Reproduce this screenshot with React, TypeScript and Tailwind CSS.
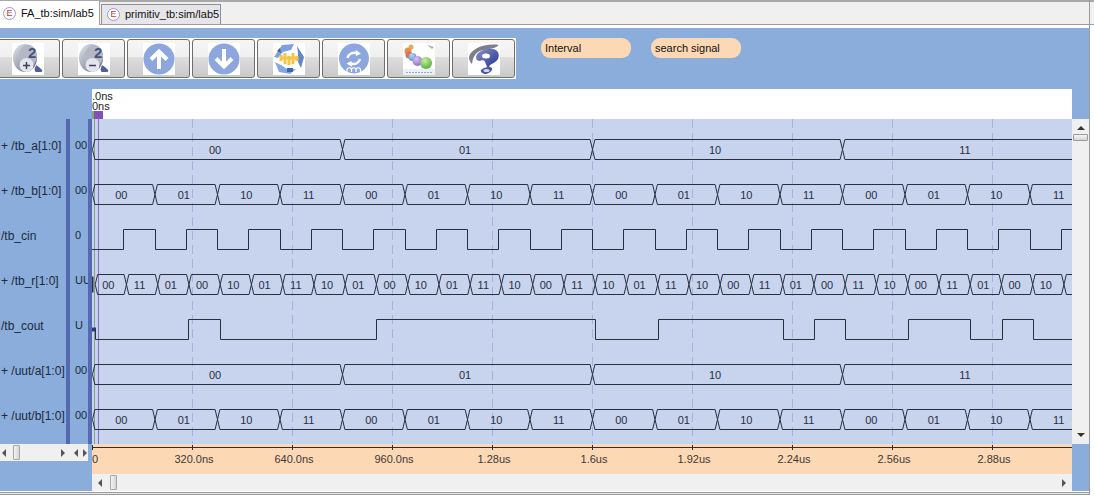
import React from 'react'

// x positions inside the plot are relative to its left edge (page x 92)
const RIGHT = 980
const BIT = 31.25
const ORIGIN = 0.5
const INK = '#283040'

const rowTop = (i: number) => 20 + i * 45

const busR = '00 11 01 00 10 01 11 10 01 00 10 01 11 10 00 11 10 01 11 10 00 11 01 00 11 10 00 11 01 00 10'.split(' ')
const cycle = ['00', '01', '10', '11']

const signals = [
  { name: '+ /tb_a[1:0]', value: '00' },
  { name: '+ /tb_b[1:0]', value: '00' },
  { name: '/tb_cin', value: '0' },
  { name: '+ /tb_r[1:0]', value: 'UU' },
  { name: '/tb_cout', value: 'U' },
  { name: '+ /uut/a[1:0]', value: '00' },
  { name: '+ /uut/b[1:0]', value: '00' },
]

const ticks = ['320.0ns', '640.0ns', '960.0ns', '1.28us', '1.6us', '1.92us', '2.24us', '2.56us', '2.88us']

const hex = (a: number, b: number, top: number) => {
  const bot = top + 20
  const mid = top + 10
  const s = 2.4
  const r = Math.min(b, RIGHT + 10)
  return `M${a} ${mid}L${a + s} ${top}L${r - s} ${top}L${r} ${mid}L${r - s} ${bot}L${a + s} ${bot}Z`
}

const Bus: React.FC<{ row: number; period: number }> = ({ row, period }) => {
  const top = rowTop(row) + 0.5
  const items = []
  for (let k = 0; k * period < RIGHT; k++) {
    const a = ORIGIN + k * period
    items.push(
      <g key={k}>
        <path d={hex(a, a + period, top)} fill="none" stroke={INK} />
        <text x={a + period / 2 - 2.5} y={top + 14} textAnchor="middle" fill={INK} fontSize="11">
          {cycle[k % 4]}
        </text>
      </g>,
    )
  }
  return <g>{items}</g>
}

// starts low at `start`, every edge toggles the level
const Square: React.FC<{ row: number; start: number; edges: number[] }> = ({ row, start, edges }) => {
  const hi = rowTop(row) + 0.5
  const lo = hi + 20
  let level = lo
  let d = `M${start} ${lo}`
  edges.forEach((x) => {
    const next = level === lo ? hi : lo
    d += `L${x} ${level}L${x} ${next}`
    level = next
  })
  return <path d={`${d}L${RIGHT} ${level}`} fill="none" stroke={INK} />
}

const Waves = () => {
  const cin: number[] = []
  for (let k = 1; k * BIT < RIGHT; k++) cin.push(Math.round(k * BIT) + 0.5)
  const coutEdges = [188, 220, 376, 595, 658, 783, 814, 845, 908, 970, 1002, 1033].map((x) => x - 92 + 0.5)
  const rTop = rowTop(3) + 0.5
  const coutTop = rowTop(4) + 0.5

  return (
    <svg width="980" height="325" className="block">
      {Array.from({ length: 9 }).map((_, i) => (
        <line key={i} x1={100.5 + i * 100} x2={100.5 + i * 100} y1="0" y2="325" stroke="#a5b3dc" strokeDasharray="9 5" />
      ))}
      <line x1="2.5" x2="2.5" y1="0" y2="325" stroke="#7fa878" />
      <line x1="6.5" x2="6.5" y1="0" y2="325" stroke="#8a6cc8" />

      <Bus row={0} period={250} />
      <Bus row={1} period={62.5} />
      <Square row={2} start={0} edges={cin} />

      {/* tb_r: undefined until the first delta, then every 100ns */}
      <path d={`M0.5 ${rTop + 2}L0.5 ${rTop + 18}`} stroke={INK} strokeWidth="2" />
      {busR.map((v, k) => {
        const a = 3.2 + k * BIT
        return (
          <g key={k}>
            <path d={hex(a, a + BIT, rTop)} fill="none" stroke={INK} />
            <text x={16.3 + k * BIT} y={rTop + 14} textAnchor="middle" fill={INK} fontSize="11">
              {v}
            </text>
          </g>
        )
      })}
      <path d={hex(3.2 + 31 * BIT, 3.2 + 32 * BIT, rTop)} fill="none" stroke={INK} />

      <rect x="0" y={coutTop + 8} width="4" height="4" fill="#2c3c80" />
      <path d={`M3.5 ${coutTop + 10}L3.5 ${coutTop + 20}`} stroke={INK} />
      <Square row={4} start={3.5} edges={coutEdges} />

      <Bus row={5} period={250} />
      <Bus row={6} period={62.5} />
    </svg>
  )
}

const Ruler = () => (
  <svg width="980" height="30" className="block">
    <line x1="0" x2="980" y1="3.5" y2="3.5" stroke={INK} />
    <line x1="0.5" x2="0.5" y1="1" y2="6" stroke={INK} />
    <text x="0" y="19" fill="#3a3a3a" fontSize="11">0</text>
    {ticks.map((t, i) => (
      <g key={t}>
        <line x1={100.5 + i * 100} x2={100.5 + i * 100} y1="1" y2="6" stroke={INK} />
        <text x={102 + i * 100} y="19" textAnchor="middle" fill="#3a3a3a" fontSize="11">
          {t}
        </text>
      </g>
    ))}
  </svg>
)

const TabGlyph = () => (
  <span className="flex h-[13px] w-[13px] shrink-0 items-center justify-center rounded-full border border-[#9a97dc] bg-white text-[9px] leading-none text-[#c04040]">
    E
  </span>
)

const ZoomIcon: React.FC<{ id: string; plus?: boolean }> = ({ id, plus }) => (
  <svg width="32" height="32" viewBox="0 0 32 32">
    <defs>
      <linearGradient id={id} x1="0" y1="0" x2="1" y2="1">
        <stop offset="0" stopColor="#e4e6ee" />
        <stop offset="0.55" stopColor="#9aa0ae" />
        <stop offset="1" stopColor="#5e6472" />
      </linearGradient>
    </defs>
    <rect width="32" height="32" fill="#fff" />
    <ellipse cx="13" cy="15" rx="12" ry="14" fill={`url(#${id})`} />
    <ellipse cx="16" cy="13" rx="9" ry="11" fill="#b4b8c6" />
    <text x="16" y="15" fontSize="15" fontWeight="700" fill="#4a5278">2</text>
    <circle cx="14.5" cy="22" r="7" fill="#e4e5ea" />
    <path d={plus ? 'M11 22.5h7M14.5 19v7' : 'M11 22.5h7'} stroke="#39405f" strokeWidth="1.5" />
    <path d="M24 22l3.5 2.5 3 3-1 1.5h-6l-1-2.5z" fill="#4e5f9c" />
  </svg>
)

const ArrowIcon: React.FC<{ down?: boolean }> = ({ down }) => (
  <svg width="32" height="32" viewBox="0 0 32 32">
    <rect width="32" height="32" fill="#fff" />
    <circle cx="16" cy="16" r="15.5" fill="#8da7de" />
    <g transform={down ? 'rotate(180 16 16)' : undefined} stroke="#fff" strokeWidth="4" fill="none">
      <path d="M16 26V9" />
      <path d="M8 16.5l8-8 8 8" />
    </g>
  </svg>
)

const StarIcon = () => (
  <svg width="32" height="32" viewBox="0 0 32 32">
    <rect width="32" height="32" fill="#fff" />
    <path d="M9 2L21 1 18 7 10 9 5 15 1 14z" fill="#7fa2dc" />
    <path d="M24 3L31 14 28 25 25 19 25 10z" fill="#5d88cc" />
    <path d="M2 19L8 22 14 26 23 26 17 31 6 29z" fill="#86a8e0" />
    <path d="M4 8l3-3 1 5z" fill="#3b5fa8" />
    <path d="M14 25h6v4h-6z" fill="#3f66ae" />
    <path d="M8 12v6M12 10v11M16 13v9M20 10v11M24 13v5M7 15h18" fill="none" stroke="#f3c648" strokeWidth="3" />
  </svg>
)

const RefreshIcon = () => (
  <svg width="32" height="32" viewBox="0 0 32 32">
    <rect width="32" height="32" fill="#fff" />
    <circle cx="16" cy="15.5" r="15" fill="#8da7de" />
    <g fill="none" stroke="#fff" strokeWidth="2.4">
      <path d="M9.5 15c1-4 5-6.5 10-4.5" />
      <path d="M22 16c-1 4-5 6-10 4.5" />
    </g>
    <path d="M17.5 7l5.5 3.5-5 2.5zM14 24l-5.500-3.500 5-2.500z" fill="#fff" />
    <path d="M9 29v-2a2 2 0 0 1 4.500 0v2M13.500 27a2 2 0 0 1 4.500 0v2M18 27a2 2 0 0 1 4.500 0v2" fill="none" stroke="#fff" strokeWidth="1.2" />
  </svg>
)

const BallsIcon = () => (
  <svg width="32" height="32" viewBox="0 0 32 32">
    <defs>
      <radialGradient id="ball-green" cx="0.4" cy="0.3" r="0.8">
        <stop offset="0" stopColor="#c8ef9c" />
        <stop offset="1" stopColor="#4aa832" />
      </radialGradient>
      <radialGradient id="ball-purple" cx="0.4" cy="0.3" r="0.8">
        <stop offset="0" stopColor="#d9c4f0" />
        <stop offset="1" stopColor="#8a62c2" />
      </radialGradient>
      <radialGradient id="ball-blue" cx="0.4" cy="0.3" r="0.8">
        <stop offset="0" stopColor="#b8d8f0" />
        <stop offset="1" stopColor="#4a88c0" />
      </radialGradient>
    </defs>
    <rect width="32" height="32" fill="#fff" />
    <rect y="26" width="32" height="6" fill="#eaf1f6" />
    <path d="M24 2l7 2-2 2z" fill="#a8b0b4" />
    <circle cx="8" cy="4" r="2.500" fill="#d8b060" />
    <circle cx="5" cy="8" r="3.500" fill="#ea8c4c" />
    <circle cx="6" cy="12" r="3.500" fill="#d8705a" />
    <circle cx="9.500" cy="14" r="4" fill="url(#ball-blue)" />
    <circle cx="14.500" cy="18" r="5" fill="url(#ball-purple)" />
    <circle cx="23" cy="20" r="6" fill="url(#ball-green)" />
    <path d="M3 29.500h26" stroke="#9aa8c0" strokeDasharray="2 1" />
  </svg>
)

const SwirlIcon = () => (
  <svg width="32" height="32" viewBox="0 0 32 32">
    <defs>
      <linearGradient id="swirl" x1="0" y1="0" x2="1" y2="1">
        <stop offset="0" stopColor="#8a92c8" />
        <stop offset="1" stopColor="#1f2f92" />
      </linearGradient>
    </defs>
    <rect width="32" height="32" fill="#fff" />
    <path d="M1 14C3 6 16 0 31 2 28 5 22 6 16 7 9 8 5 12 4 21 2 19 1 17 1 14z" fill="#7d808c" />
    <path d="M8 14C9 8 19 5 25 6 30 7 32 11 30 16 28 19 25 20 22 22L20 26 17 19C17 17 13 17 12 18 10 18 8 17 8 14z" fill="url(#swirl)" />
    <ellipse cx="18" cy="13" rx="4" ry="2.500" fill="#fff" />
    <path d="M13 27c3-3 9-4 11-2 1 2-2 5-6 6-3 0-6-2-5-4z" fill="#4a55a8" />
    <ellipse cx="18.500" cy="27.500" rx="3" ry="1.500" fill="#d8dbee" />
  </svg>
)

const ToolButton: React.FC<{ children: React.ReactNode; first?: boolean }> = ({ children, first }) => (
  <div
    className={`flex h-[39px] items-center justify-center border border-[#6e6e6e] bg-[linear-gradient(#f5f5f5_0%,#f0f0f0_45%,#dedede_46%,#c9c9c9_100%)] ${
      first ? 'w-[60px] rounded-r-[3px] border-l-0 pr-[4px]' : 'w-[63px] rounded-[3px]'
    }`}
  >
    {children}
  </div>
)

const Tri: React.FC<{ dir: 'l' | 'r' | 'u' | 'd' }> = ({ dir }) => {
  const pts = { l: '4,0 4,8 0,4', r: '0,0 0,8 4,4', u: '0,4 8,4 4,0', d: '0,0 8,0 4,4' }[dir]
  const horizontal = dir === 'l' || dir === 'r'
  return (
    <svg width={horizontal ? 4 : 8} height={horizontal ? 8 : 4} className="shrink-0">
      <polygon points={pts} fill={horizontal ? '#555' : '#333'} />
    </svg>
  )
}

const thumbH = 'h-[15px] w-[7px] shrink-0 rounded-[1px] border border-[#a8a8a8] bg-[linear-gradient(90deg,#f4f4f4,#d4d4d4)]'

export default function App() {
  return (
    <div className="relative flex h-[498px] w-[1094px] flex-col overflow-hidden bg-white font-['Liberation_Sans',sans-serif] text-[11px] text-[#222]">
      {/* Editor tabs */}
      <div className="h-[28px] shrink-0">
        <div className="flex h-[25px] items-end border-t-2 border-b border-t-[#a8a8a8] border-b-[#9c9c9c] bg-[#f0f0f0]">
          <div className="-mb-[1px] flex h-[24px] w-[100px] items-center gap-[5px] border-r border-[#a0a0a0] bg-white pl-[3px] text-[#111]">
            <TabGlyph />
            FA_tb:sim/lab5
          </div>
          <div className="ml-[1px] flex h-[20px] w-[120px] items-center gap-[5px] border border-b-0 border-[#909090] bg-[#e6e6ea] pl-[5px] text-[#111]">
            <TabGlyph />
            primitiv_tb:sim/lab5
          </div>
        </div>
      </div>

      <div className="flex h-[463px] w-[1089px] shrink-0 flex-col bg-[#8aaddb]">
        {/* Toolbar */}
        <div className="flex h-[61px] shrink-0 items-start gap-[25px] pt-[10px]">
          <div className="flex h-[41px] w-[516px] shrink-0 gap-[2px] bg-white pt-[1px]">
            <ToolButton first><ZoomIcon id="zoom-in" plus /></ToolButton>
            <ToolButton><ZoomIcon id="zoom-out" /></ToolButton>
            <ToolButton><ArrowIcon /></ToolButton>
            <ToolButton><ArrowIcon down /></ToolButton>
            <ToolButton><StarIcon /></ToolButton>
            <ToolButton><RefreshIcon /></ToolButton>
            <ToolButton><BallsIcon /></ToolButton>
            <ToolButton><SwirlIcon /></ToolButton>
          </div>
          <div className="flex h-[20px] w-[90px] items-center rounded-[9px] bg-[#fdd8b4] pl-[4px] text-[#111]">Interval</div>
          <div className="-ml-[5px] flex h-[20px] w-[90px] items-center rounded-[9px] bg-[#fdd8b4] pl-[4px] text-[#111]">search signal</div>
        </div>

        <div className="flex min-h-0 flex-1">
          {/* Names and values */}
          <div className="flex w-[92px] shrink-0 flex-col pt-[30px]">
            <div className="flex h-[325px]">
              <div className="w-[66px] overflow-hidden pt-[4px] pl-[1px] text-[12px] text-[#1c2a3c]">
                {signals.map((s) => (
                  <div key={s.name} className="flex h-[45px] items-center whitespace-nowrap">{s.name}</div>
                ))}
              </div>
              <div className="w-[4px] bg-[#5569b1]" />
              <div className="w-[18px] pt-[4px] pl-[5px] text-[#1c2a3c]">
                {signals.map((s) => (
                  <div key={s.name} className="flex h-[45px] items-center whitespace-nowrap">{s.value}</div>
                ))}
              </div>
              <div className="w-[4px] bg-[#5569b1]" />
            </div>
            <div className="flex h-[17px] w-[88px] bg-[#f0f0f0]">
              <div className="flex w-[70px] items-center pl-[2px] pr-[5px]">
                <Tri dir="l" />
                <div className={`ml-[7px] ${thumbH}`} />
                <span className="flex-1" />
                <Tri dir="r" />
              </div>
              <div className="flex w-[18px] items-center justify-between pl-[4px] pr-[1px]">
                <Tri dir="l" />
                <Tri dir="r" />
              </div>
            </div>
          </div>

          {/* Wave window */}
          <div className="flex w-[980px] shrink-0 flex-col">
            <div className="flex h-[30px] flex-col bg-white text-[11px] leading-[10px] text-[#222]">
              <div className="pt-[2px]">.0ns</div>
              <div>0ns</div>
              <div className="mt-auto flex h-[9px]">
                <div className="w-[2px] bg-[#7fa878]" />
                <div className="w-[9px] bg-[#8450b8]" />
              </div>
            </div>
            <div className="h-[325px] bg-[#c8d3ee]">
              <Waves />
            </div>
            <div className="h-[30px] bg-[#fdd8b4]">
              <Ruler />
            </div>
            <div className="flex h-[17px] items-center bg-[#f0f0f0] pl-[6px] pr-[6px]">
              <Tri dir="l" />
              <div className={`ml-[8px] ${thumbH}`} />
              <span className="flex-1" />
              <Tri dir="r" />
            </div>
          </div>

          {/* Vertical scroll */}
          <div className="w-[17px] shrink-0 pt-[30px]">
            <div className="flex h-[325px] flex-col items-center bg-[#f0f0f0] pt-[7px] pb-[7px]">
              <Tri dir="u" />
              <div className="mt-[4px] h-[7px] w-[15px] shrink-0 rounded-[1px] border border-[#9a9a9a] bg-[linear-gradient(#f4f4f4,#d4d4d4)]" />
              <span className="flex-1" />
              <Tri dir="d" />
            </div>
          </div>
        </div>
      </div>

      {/* Window frame */}
      <div className="mt-[1px] h-[3px] w-[1090px] border-y border-y-[#9a9a9a] bg-[#e8e8e8]" />
      <div className="absolute top-0 right-[4px] h-[494px] w-[1px] bg-[#9a9a9a]" />
    </div>
  )
}
